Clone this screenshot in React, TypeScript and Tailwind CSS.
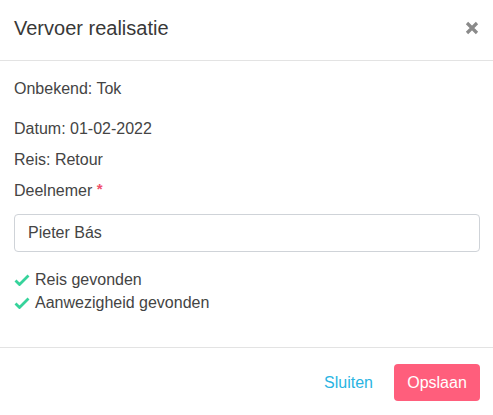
import React from "react";

function Check() {
  return (
    <svg width="16" height="12" viewBox="0 0 16 12" className="shrink-0">
      <path d="M1.5 6.5 L5.5 10.5 L14.5 1.5" fill="none" stroke="#36d39b" strokeWidth="2.8" strokeLinecap="butt" strokeLinejoin="miter" />
    </svg>
  );
}

export default function App() {
  return (
    <div className="w-[493px] h-[415px] bg-white text-[#444] overflow-hidden" style={{ fontFamily: '"Liberation Sans", Arial, sans-serif' }}>
      <div className="h-[61px] flex items-center justify-between pl-[14px] pr-[14px] pb-[5px] border-b border-[#e3e3e3]">
        <h2 className="text-[20px] text-[#383838] leading-none">Vervoer realisatie</h2>
        <svg width="14" height="14" viewBox="0 0 14 14" className="mt-[1px]">
          <path d="M2 2 L12 12 M12 2 L2 12" stroke="#8a8a8a" strokeWidth="3.2" strokeLinecap="butt" />
        </svg>
      </div>
      <div className="pl-[14px] pr-[13px] pt-[16px] pb-[33px] text-[16px]">
        <div className="leading-[24px]">Onbekend: Tok</div>
        <div className="leading-[24px] mt-[16px]">Datum: 01-02-2022</div>
        <div className="leading-[24px] mt-[7px]">Reis: Retour</div>
        <div className="leading-[24px] mt-[7px]">
          Deelnemer <span className="text-[#f0506e] text-[15px] font-bold align-top relative top-[-2px]">*</span>
        </div>
        <div className="mt-[11px] h-[38px] border border-[#cfd3d8] rounded-[4px] flex items-center pl-[13px] text-[#444]">
          Pieter Bás
        </div>
        <div className="mt-[16px] flex flex-col">
          <div className="flex items-center gap-[5px] leading-[23px]">
            <Check />
            <span>Reis gevonden</span>
          </div>
          <div className="flex items-center gap-[5px] leading-[23px]">
            <Check />
            <span>Aanwezigheid gevonden</span>
          </div>
        </div>
      </div>
      <div className="border-t border-[#e3e3e3] flex justify-end items-center pt-[16px] pr-[13px] gap-[9px]">
        <button className="h-[37px] px-[12px] text-[16px] text-[#2ab4e2]">Sluiten</button>
        <button className="h-[37px] w-[86px] rounded-[4px] bg-[#ff5e7c] text-white text-[16px]">Opslaan</button>
      </div>
    </div>
  );
}
